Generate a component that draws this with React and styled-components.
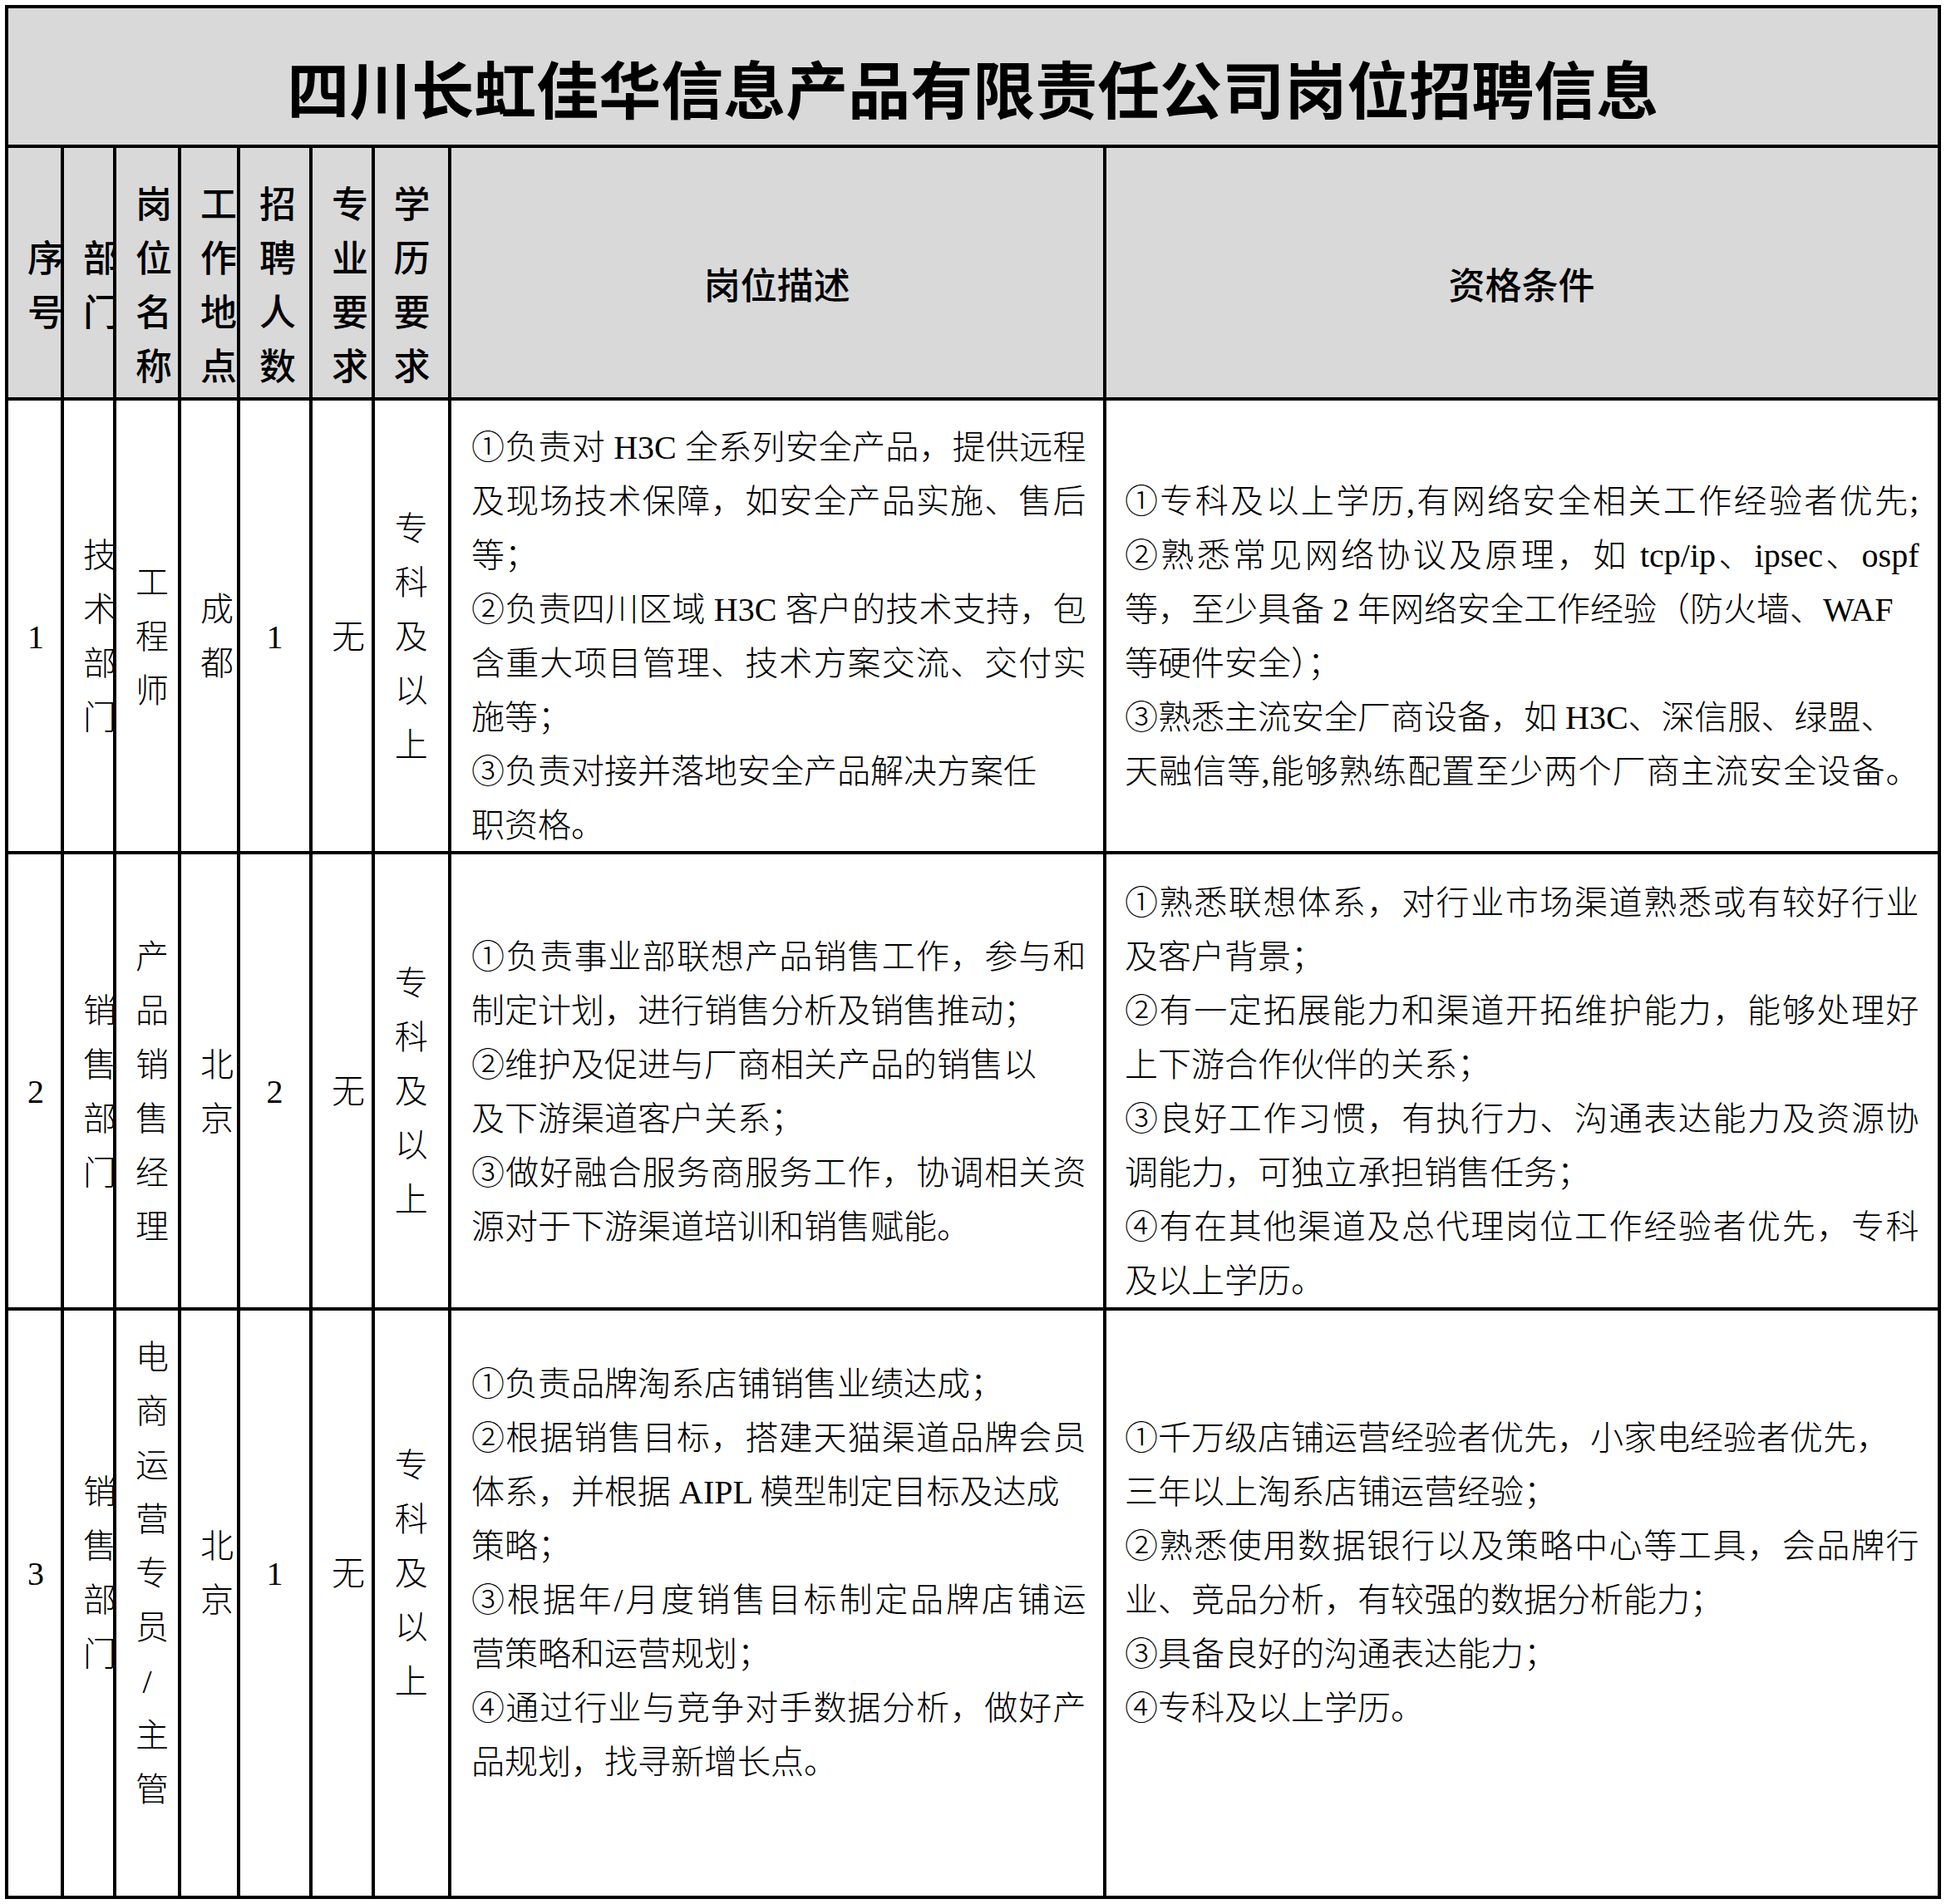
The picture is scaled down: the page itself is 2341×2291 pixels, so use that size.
import React from 'react';
import styled, { createGlobalStyle, css } from 'styled-components';

const Global = createGlobalStyle`
  html, body { margin: 0; padding: 0; background: #fff; }
  body {
    font-family: "Liberation Serif", "Noto Sans CJK SC", serif;
    color: #000;
  }
`;

const Page = styled.div`
  padding: 6px 0 0 6px;
`;

const Sheet = styled.div`
  display: grid;
  grid-template-columns: 63px 59px 74px 67px 83px 70.5px 88.5px 783.5px 1000px;
  grid-template-rows: 164px 300px 542px 545px 704px;
  gap: 4px;
  padding: 4px;
  background: #000;
  width: max-content;
`;

const Title = styled.div`
  grid-column: 1 / -1;
  background: #d9d9d9;
  display: flex;
  flex-direction: column;
  justify-content: center;
  padding-top: 24px;
  text-align: center;
  font-family: "Noto Sans CJK SC", sans-serif;
  font-weight: 700;
  font-size: 75px;
  line-height: 1;
`;

const HeadCell = styled.div`
  background: #d9d9d9;
  display: flex;
  flex-direction: column;
  justify-content: center;
  padding: 26px 23px 0;
  overflow: hidden;
  text-align: center;
  line-break: anywhere;
  font-family: "Noto Sans CJK SC", sans-serif;
  font-weight: 500;
  font-size: 44px;
  line-height: 65px;
`;

const Cell = styled.div`
  background: #fff;
  display: flex;
  flex-direction: column;
  justify-content: center;
  overflow: hidden;
  text-align: center;
  line-break: anywhere;
  font-size: 40px;
  font-weight: 300;
  line-height: 65px;
  padding: 0 23px;
  ${(p) =>
    p.$shift === 'up'
      ? css`padding-bottom: 72px;`
      : css`padding-top: 26px;`}
`;

const TextCell = styled(Cell)`
  text-align: left;
  line-break: auto;
  padding-left: ${(p) => p.$pl}px;
  padding-right: ${(p) => p.$pr}px;
`;

const Line = styled.div`
  white-space: nowrap;
  ${(p) =>
    p.$full &&
    css`
      text-align: justify;
      text-align-last: justify;
    `}
`;

const headers = ['序号', '部门', '岗位名称', '工作地点', '招聘人数', '专业要求', '学历要求', '岗位描述', '资格条件'];

const rows = [
  {
    no: '1',
    dept: '技术部门',
    post: '工程师',
    place: '成都',
    count: '1',
    major: '无',
    edu: '专科及以上',
    shift: 'down',
    desc: [
      ['①负责对 H3C 全系列安全产品，提供远程', true],
      ['及现场技术保障，如安全产品实施、售后', true],
      ['等；', false],
      ['②负责四川区域 H3C 客户的技术支持，包', true],
      ['含重大项目管理、技术方案交流、交付实', true],
      ['施等；', false],
      ['③负责对接并落地安全产品解决方案任', false],
      ['职资格。', false],
    ],
    qual: [
      ['①专科及以上学历,有网络安全相关工作经验者优先;', true],
      ['②熟悉常见网络协议及原理，如 tcp/ip、ipsec、ospf', true],
      ['等，至少具备 2 年网络安全工作经验（防火墙、WAF', false],
      ['等硬件安全）；', false],
      ['③熟悉主流安全厂商设备，如 H3C、深信服、绿盟、', false],
      ['天融信等,能够熟练配置至少两个厂商主流安全设备。', true],
    ],
  },
  {
    no: '2',
    dept: '销售部门',
    post: '产品销售经理',
    place: '北京',
    count: '2',
    major: '无',
    edu: '专科及以上',
    shift: 'down',
    desc: [
      ['①负责事业部联想产品销售工作，参与和', true],
      ['制定计划，进行销售分析及销售推动；', false],
      ['②维护及促进与厂商相关产品的销售以', false],
      ['及下游渠道客户关系；', false],
      ['③做好融合服务商服务工作，协调相关资', true],
      ['源对于下游渠道培训和销售赋能。', false],
    ],
    qual: [
      ['①熟悉联想体系，对行业市场渠道熟悉或有较好行业', true],
      ['及客户背景；', false],
      ['②有一定拓展能力和渠道开拓维护能力，能够处理好', true],
      ['上下游合作伙伴的关系；', false],
      ['③良好工作习惯，有执行力、沟通表达能力及资源协', true],
      ['调能力，可独立承担销售任务；', false],
      ['④有在其他渠道及总代理岗位工作经验者优先，专科', true],
      ['及以上学历。', false],
    ],
  },
  {
    no: '3',
    dept: '销售部门',
    post: '电商运营专员/主管',
    place: '北京',
    count: '1',
    major: '无',
    edu: '专科及以上',
    shift: 'up',
    desc: [
      ['①负责品牌淘系店铺销售业绩达成；', false],
      ['②根据销售目标，搭建天猫渠道品牌会员', true],
      ['体系，并根据 AIPL 模型制定目标及达成', false],
      ['策略；', false],
      ['③根据年/月度销售目标制定品牌店铺运', true],
      ['营策略和运营规划；', false],
      ['④通过行业与竞争对手数据分析，做好产', true],
      ['品规划，找寻新增长点。', false],
    ],
    qual: [
      ['①千万级店铺运营经验者优先，小家电经验者优先，', false],
      ['三年以上淘系店铺运营经验；', false],
      ['②熟悉使用数据银行以及策略中心等工具，会品牌行', true],
      ['业、竞品分析，有较强的数据分析能力；', false],
      ['③具备良好的沟通表达能力；', false],
      ['④专科及以上学历。', false],
    ],
  },
];

function Lines({ items }) {
  return items.map(([t, full], i) => (
    <Line key={i} $full={full}>
      {t}
    </Line>
  ));
}

export default function App() {
  return (
    <Page>
      <Global />
      <Sheet>
        <Title>四川长虹佳华信息产品有限责任公司岗位招聘信息</Title>
        {headers.map((h) => (
          <HeadCell key={h}>{h}</HeadCell>
        ))}
        {rows.map((r) => (
          <React.Fragment key={r.no}>
            <Cell $shift={r.shift}>{r.no}</Cell>
            <Cell $shift={r.shift}>{r.dept}</Cell>
            <Cell $shift={r.shift}>{r.post}</Cell>
            <Cell $shift={r.shift}>{r.place}</Cell>
            <Cell $shift={r.shift}>{r.count}</Cell>
            <Cell $shift={r.shift}>{r.major}</Cell>
            <Cell $shift={r.shift}>{r.edu}</Cell>
            <TextCell $shift={r.shift} $pl={24} $pr={20}>
              <Lines items={r.desc} />
            </TextCell>
            <TextCell $shift={r.shift} $pl={22.5} $pr={22}>
              <Lines items={r.qual} />
            </TextCell>
          </React.Fragment>
        ))}
      </Sheet>
    </Page>
  );
}
